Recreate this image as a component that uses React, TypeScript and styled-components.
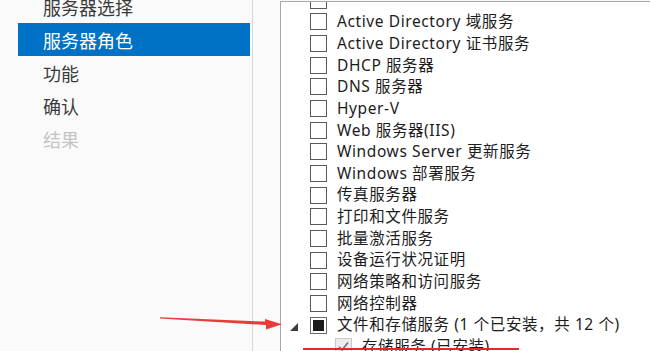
import { createGlobalStyle, styled } from "styled-components";

const GlobalStyle = createGlobalStyle`
  html, body {
    margin: 0;
    padding: 0;
    background: #fafafa;
  }
  body {
    font-family: "Noto Sans", "Noto Sans CJK SC", sans-serif;
  }
`;

type NavItem = { label: string; state?: "active" | "disabled" };

const navItems: NavItem[] = [
  { label: "服务器选择" },
  { label: "服务器角色", state: "active" },
  { label: "功能" },
  { label: "确认" },
  { label: "结果", state: "disabled" },
];

type Role = {
  label: string;
  check?: "none" | "partial" | "installed";
  expander?: boolean;
  level?: number;
};

// first row is scrolled almost out of view, only its checkbox edge shows
const roles: Role[] = [
  { label: "" },
  { label: "Active Directory 域服务" },
  { label: "Active Directory 证书服务" },
  { label: "DHCP 服务器" },
  { label: "DNS 服务器" },
  { label: "Hyper-V" },
  { label: "Web 服务器(IIS)" },
  { label: "Windows Server 更新服务" },
  { label: "Windows 部署服务" },
  { label: "传真服务器" },
  { label: "打印和文件服务" },
  { label: "批量激活服务" },
  { label: "设备运行状况证明" },
  { label: "网络策略和访问服务" },
  { label: "网络控制器" },
  { label: "文件和存储服务 (1 个已安装，共 12 个)", check: "partial", expander: true },
  { label: "存储服务 (已安装)", check: "installed", level: 1 },
];

const App = () => {
  return (
    <>
      <GlobalStyle />
      <Page>
        <Sidebar>
          <NavList>
            {navItems.map((item) => (
              <NavRow key={item.label} $state={item.state}>
                {item.label}
              </NavRow>
            ))}
          </NavList>
        </Sidebar>
        <Main>
          <ListBox>
            <RoleList>
              {roles.map((role, i) => (
                <RoleRow key={i} $level={role.level ?? 0}>
                  <Expander>
                    {role.expander && (
                      <svg width="8" height="8" viewBox="0 0 8 8">
                        <polygon points="8,0 8,8 0,8" fill="#3c3c3c" />
                      </svg>
                    )}
                  </Expander>
                  <CheckBox $state={role.check ?? "none"}>
                    {role.check === "partial" && <PartialMark />}
                    {role.check === "installed" && (
                      <svg width="13" height="13" viewBox="0 0 13 13">
                        <polyline
                          points="2,7 5,10 11,2.5"
                          fill="none"
                          stroke="#7c7c7c"
                          strokeWidth="1.8"
                        />
                      </svg>
                    )}
                  </CheckBox>
                  <RoleLabel>{role.label}</RoleLabel>
                </RoleRow>
              ))}
            </RoleList>
          </ListBox>
        </Main>
        <Annotation width="650" height="351" viewBox="0 0 650 351">
          <polygon
            points="160,317.2 265,321.6 265,319 282,324.2 266,329.5 266,325 160,318.4"
            fill="#ec3a3a"
          />
          <rect x="303" y="348" width="216" height="2" fill="#e8262b" />
        </Annotation>
      </Page>
    </>
  );
};

export default App;

const Page = styled.div`
  position: relative;
  display: flex;
  width: 650px;
  height: 351px;
  overflow: hidden;
  background: #fafafa;
`;

const Sidebar = styled.div`
  width: 252px;
  flex-shrink: 0;
  border-right: 1px solid #d6d6d6;
  overflow: hidden;
`;

const NavList = styled.div`
  display: flex;
  flex-direction: column;
  margin-top: -10px;
  padding-left: 18px;
  padding-right: 2px;
`;

const NavRow = styled.div<{ $state?: "active" | "disabled" }>`
  height: 33px;
  display: flex;
  align-items: center;
  padding-left: 25px;
  font-family: "Noto Sans CJK SC", sans-serif;
  font-size: 18px;
  color: ${(p) =>
    p.$state === "active" ? "#ffffff" : p.$state === "disabled" ? "#c4c4c4" : "#3a3a3a"};
  background: ${(p) => (p.$state === "active" ? "#0072c6" : "transparent")};
`;

const Main = styled.div`
  flex: 1;
  padding: 1px 0 0 27px;
  display: flex;
`;

const ListBox = styled.div`
  flex: 1;
  background: #ffffff;
  border-top: 1px solid #a8a8a8;
  border-left: 1px solid #a8a8a8;
  overflow: hidden;
`;

const RoleList = styled.div`
  display: flex;
  flex-direction: column;
  margin-top: -12.5px;
`;

const RoleRow = styled.div<{ $level: number }>`
  height: 21.67px;
  flex-shrink: 0;
  display: flex;
  align-items: center;
  padding-left: ${(p) => 9 + p.$level * 25}px;
  white-space: nowrap;
`;

const Expander = styled.div`
  width: 20px;
  height: 10px;
  display: flex;
  align-items: flex-end;
  padding-top: 2px;
`;

const CheckBox = styled.div<{ $state: "none" | "partial" | "installed" }>`
  box-sizing: border-box;
  width: 17px;
  height: 17px;
  flex-shrink: 0;
  display: flex;
  align-items: center;
  justify-content: center;
  border: 1px solid
    ${(p) => (p.$state === "installed" ? "#c8c8c8" : p.$state === "partial" ? "#6a6a6a" : "#5a5a5a")};
  background: ${(p) => (p.$state === "installed" ? "#ececec" : "#ffffff")};
`;

const PartialMark = styled.div`
  width: 11px;
  height: 11px;
  background: #1a1a1a;
`;

const RoleLabel = styled.span`
  margin-left: 10px;
  font-family: "Noto Sans", "Noto Sans CJK SC", sans-serif;
  font-size: 15.5px;
  letter-spacing: 0.6px;
  color: #1c1c1c;
  line-height: 1;
`;

const Annotation = styled.svg`
  position: absolute;
  left: 0;
  top: 0;
  pointer-events: none;
`;
